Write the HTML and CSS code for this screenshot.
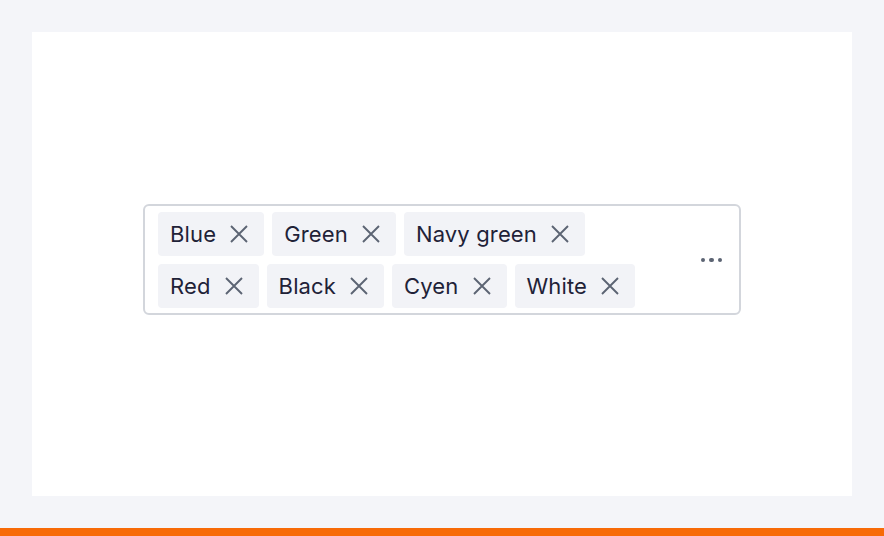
FILE: index.html
```html
<!DOCTYPE html>
<html>
<head>
<meta charset="utf-8">
<link rel="stylesheet" href="styles.css">
</head>
<body>
<div class="page">
  <div class="panel">
    <div class="select">
      <div class="tags">
        <span class="tag">Blue<span class="close"><svg viewBox="0 0 24 24"><path d="M4 4L20 20M20 4L4 20"/></svg></span></span>
        <span class="tag">Green<span class="close"><svg viewBox="0 0 24 24"><path d="M4 4L20 20M20 4L4 20"/></svg></span></span>
        <span class="tag">Navy green<span class="close"><svg viewBox="0 0 24 24"><path d="M4 4L20 20M20 4L4 20"/></svg></span></span>
        <span class="tag">Red<span class="close"><svg viewBox="0 0 24 24"><path d="M4 4L20 20M20 4L4 20"/></svg></span></span>
        <span class="tag">Black<span class="close"><svg viewBox="0 0 24 24"><path d="M4 4L20 20M20 4L4 20"/></svg></span></span>
        <span class="tag">Cyen<span class="close"><svg viewBox="0 0 24 24"><path d="M4 4L20 20M20 4L4 20"/></svg></span></span>
        <span class="tag">White<span class="close"><svg viewBox="0 0 24 24"><path d="M4 4L20 20M20 4L4 20"/></svg></span></span>
      </div>
      <div class="more"><span class="dot"></span><span class="dot"></span><span class="dot"></span></div>
    </div>
  </div>
</div>
<div class="bar"></div>
</body>
</html>
```
FILE: styles.css
```css
html, body {
  margin: 0;
  padding: 0;
}
body {
  background: #f4f5f9;
  font-family: Inter, "Noto Sans", sans-serif;
  width: 884px;
  height: 536px;
  overflow: hidden;
}
.page {
  padding: 32px 32px 32px;
}
.panel {
  background: #ffffff;
  height: 464px;
  box-sizing: border-box;
  padding-top: 172px;
  display: flex;
  justify-content: center;
  align-items: flex-start;
}
.select {
  width: 598px;
  box-sizing: border-box;
  border: 2px solid #d3d6dc;
  border-radius: 6px;
  padding: 6px 17px 5px 13px;
  display: flex;
  align-items: center;
}
.tags {
  flex: 1;
  display: flex;
  flex-wrap: wrap;
  gap: 8px;
  max-width: 520px;
}
.tag {
  height: 44px;
  box-sizing: border-box;
  background: #f2f3f7;
  border-radius: 4px;
  padding: 0 13px 0 12px;
  display: inline-flex;
  align-items: center;
  gap: 11px;
  font-size: 22px;
  color: #1f2238;
  letter-spacing: 0.15px;
}
.close {
  width: 24px;
  height: 24px;
  display: inline-flex;
  align-items: center;
  justify-content: center;
}
.close svg {
  width: 24px;
  height: 24px;
  fill: none;
  stroke: #5c6473;
  stroke-width: 1.9;
}
.more {
  margin-left: auto;
  display: flex;
  gap: 4px;
  align-items: center;
}
.dot {
  width: 4.5px;
  height: 4.5px;
  border-radius: 50%;
  background: #5c6473;
}
.bar {
  height: 8px;
  background: #f76a07;
}
```
